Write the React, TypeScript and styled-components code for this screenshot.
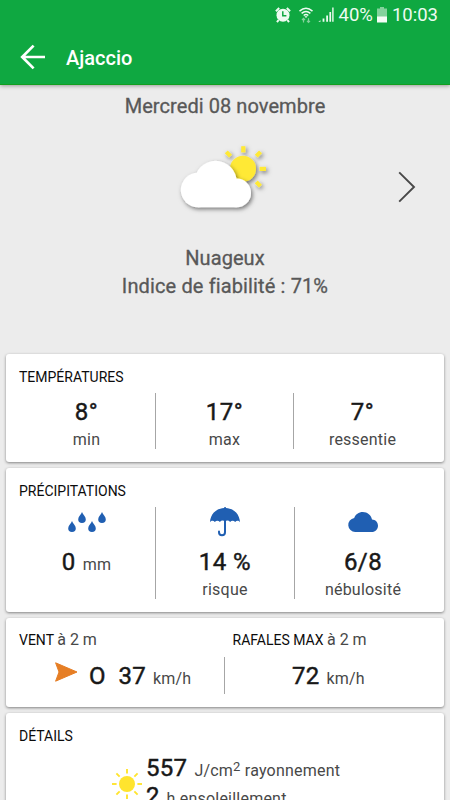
import React from 'react';
import styled, { createGlobalStyle } from 'styled-components';

const BLUE = '#205fb2';

const GlobalStyle = createGlobalStyle`
  * { box-sizing: border-box; }
  body { margin: 0; background: #ececec; font-family: Roboto, sans-serif; overflow: hidden; }
  svg { display: block; flex: none; overflow: visible; }
`;

const Screen = styled.div`
  width: 450px;
  height: 800px;
  overflow: hidden;
  display: flex;
  flex-direction: column;
  background: #ececec;
`;

const Header = styled.header`
  flex: none;
  height: 85px;
  background: #0fa841;
  border-bottom: 1px solid #129f1e;
  box-shadow: 0 1px 4px rgba(0, 0, 0, 0.35);
  color: #fff;
`;

const StatusBar = styled.div`
  height: 30px;
  display: flex;
  justify-content: flex-end;
  align-items: center;
  padding-right: 12px;
  font-size: 18.5px;
  line-height: 30px;
  color: #eefbf1;
`;

const StatusIcon = styled.svg<{ $gap: number }>`
  margin-right: ${(p) => p.$gap}px;
`;

const BatteryLevel = styled.span`
  margin-right: 4px;
`;

const AppBar = styled.div`
  height: 54px;
  display: flex;
  align-items: center;
  padding: 0 0 0 20px;
`;

const AppTitle = styled.h1`
  margin: 2px 0 0 20px;
  font-size: 20px;
  font-weight: 500;
  line-height: 26px;
`;

const Summary = styled.section`
  flex: none;
  height: 269px;
  display: flex;
  flex-direction: column;
  align-items: center;
  color: #585858;
`;

const SummaryText = styled.p<{ $spacing?: number }>`
  margin: 0;
  font-size: 20px;
  font-weight: 450;
  line-height: 28px;
  letter-spacing: ${(p) => p.$spacing ?? 0.07}px;
  -webkit-text-stroke: 0.3px currentColor;
`;

const DayRow = styled.div`
  width: 100%;
  height: 90px;
  margin: 15px 0 19px;
  display: grid;
  grid-template-columns: 1fr 90px 1fr;
  align-items: start;
  justify-items: end;
`;

const NextButton = styled.button`
  grid-column: 3;
  margin: 36px 34px 0 0;
  padding: 0;
  border: 0;
  background: none;
`;

const WeatherIcon = styled.svg`
  grid-column: 2;
  justify-self: start;
  margin-top: 7px;
`;

const DateLabel = styled(SummaryText)`
  margin-top: 7px;
`;

const Cards = styled.main`
  flex: none;
  display: flex;
  flex-direction: column;
  gap: 6px;
  padding: 0 6px;
`;

const Card = styled.section<{ $height: number }>`
  height: ${(p) => p.$height}px;
  padding: 13px 12px 0;
  background: #fff;
  border-radius: 3px;
  box-shadow: 0 1px 3px rgba(0, 0, 0, 0.45);
`;

const CardTitle = styled.h2`
  margin: 0 0 6px;
  padding-left: 1px;
  font-size: 14px;
  font-weight: 400;
  line-height: 20px;
  color: #0c0c0c;
`;

const TitleNote = styled.span`
  font-size: 16px;
  color: #484848;
`;

const Columns = styled.div<{ $template: string; $height: number }>`
  display: grid;
  grid-template-columns: ${(p) => p.$template};
  height: ${(p) => p.$height}px;
`;

const Metric = styled.div`
  display: flex;
  flex-direction: column;
  align-items: center;
  & + & { border-left: 1px solid #a6a6a6; }
`;

const Value = styled.strong<{ $spacing?: number }>`
  font-size: 24px;
  font-weight: 450;
  line-height: 28px;
  letter-spacing: ${(p) => p.$spacing ?? 0.45}px;
  color: #181818;
  -webkit-text-stroke: 0.45px currentColor;
`;

const Unit = styled.span`
  font-size: 16px;
  letter-spacing: 0.22px;
  color: #484848;
  white-space: nowrap;
`;

const Label = styled(Unit)`
  margin-top: 4px;
  line-height: 19px;
`;

const TemperatureValue = styled(Value)`
  margin-top: 5px;
`;

const IconSlot = styled.div`
  height: 30px;
  margin-bottom: 11px;
  display: flex;
  align-items: center;
`;

const Measure = styled.div`
  display: flex;
  align-items: baseline;
  gap: 7px;
`;

const WindTitles = styled.div`
  display: grid;
  grid-template-columns: 213.5px 1fr;
`;

const WindCell = styled.div<{ $indent: number }>`
  display: flex;
  align-items: center;
  padding-left: ${(p) => p.$indent}px;
  & + & { border-left: 1px solid #a6a6a6; }
`;

const Direction = styled(Value)`
  margin: 0 13px 0 11px;
`;

const WindCard = styled(Card)`
  padding-top: 12px;
`;

const WindTitle = styled(CardTitle)`
  margin-bottom: 7px;
`;

const DetailRow = styled.div`
  display: flex;
  padding: 2px 0 0 94px;
  gap: 4px;
`;

const DetailLines = styled.div`
  display: flex;
  flex-direction: column;
`;

const SunIcon = styled.svg`
  margin-top: 15px;
`;

const Exponent = styled.sup`
  font-size: 13px;
  line-height: 0;
  vertical-align: 5px;
`;

const DROPS = [
  [0, 9],
  [10, 0],
  [20, 9],
  [30, 0],
];

const Drops = () => (
  <svg width="38" height="20" viewBox="0 0 38 20" fill={BLUE}>
    {DROPS.map(([x, y]) => (
      <path
        key={x}
        transform={`translate(${x} ${y})`}
        d="M4 0C4.7 2.4 7.8 4.6 7.8 7.2A3.8 3.8 0 0 1 .2 7.2C.2 4.6 3.3 2.4 4 0Z"
      />
    ))}
  </svg>
);

const Umbrella = () => (
  <svg width="30" height="30" viewBox="0 0 30 30">
    <path
      fill={BLUE}
      d="M15 0C15.6 0 16 .4 16 .9C24 1.5 29.6 7.2 30 15.2C28.6 13.3 26.6 13.3 25.2 14.9C23.6 13.2 21.6 13.2 20.1 14.9C18.6 13.2 16.6 13.2 15 14.6C13.4 13.2 11.4 13.2 9.9 14.9C8.4 13.2 6.4 13.2 4.8 14.9C3.4 13.3 1.4 13.3 0 15.2C.4 7.2 6 1.5 14 .9C14 .4 14.4 0 15 0Z"
    />
    <path d="M15 13V25.2A3 3 0 0 1 9 25.2V24.6" fill="none" stroke={BLUE} strokeWidth="2" strokeLinecap="round" />
  </svg>
);

const SmallCloud = () => (
  <svg width="30" height="20" viewBox="0 0 30 20" fill={BLUE}>
    <path d="M7.2 20A7.1 7.1 0 0 1 6.2 5.9C7.4 2.4 10.8 0 14.8 0C19.4 0 23.3 3.2 24 7.6C27.4 7.6 30 10.4 30 13.7C30 17.2 27.2 20 23.8 20Z" />
  </svg>
);

const CloudySun = () => (
  <WeatherIcon width="90" height="70" viewBox="180 142 90 70">
    <defs>
      <filter id="soft" x="-20%" y="-20%" width="150%" height="150%">
        <feDropShadow dx="1.5" dy="2" stdDeviation="2" floodColor="#000" floodOpacity="0.5" />
      </filter>
    </defs>
    <g fill="#ffe936" filter="url(#soft)">
      <circle cx="243" cy="168.7" r="13" />
      <rect x="241.2" y="146.2" width="4.2" height="6.2" />
      <rect x="259.6" y="166.8" width="6.4" height="4.2" />
      <rect x="-3" y="-2.1" width="6" height="4.2" transform="translate(228.4 154) rotate(45)" />
      <rect x="-3" y="-2.1" width="6" height="4.2" transform="translate(258.4 154) rotate(-45)" />
      <rect x="-3" y="-2.1" width="6" height="4.2" transform="translate(258.3 184) rotate(45)" />
    </g>
    <g fill="#fff" filter="url(#soft)">
      <circle cx="198" cy="190" r="17.2" />
      <circle cx="215.6" cy="182" r="21.2" />
      <circle cx="236.7" cy="192.9" r="14.3" />
      <rect x="198" y="187" width="38.7" height="20.2" />
    </g>
  </WeatherIcon>
);

const RAYS = [0, 45, 90, 135, 180, 225, 270, 315];

const Sun = () => (
  <SunIcon width="30" height="30" viewBox="-15 -15 30 30">
    <circle r="8" fill="#ffe42e" />
    {RAYS.map((angle) => (
      <path key={angle} d="M0 -10.4V-15" stroke="#ffe42e" strokeWidth="1.9" transform={`rotate(${angle})`} />
    ))}
  </SunIcon>
);

const StatusIcons = () => (
  <>
    <StatusIcon $gap={8} width="16" height="16" viewBox="0 0 16 16">
      <circle cx="8" cy="8.2" r="6.5" fill="#eefbf1" />
      <path d="M.9 4.2L4.2 1M15.1 4.2L11.8 1M3.6 13L2 15.2M12.4 13L14 15.2" stroke="#eefbf1" strokeWidth="2" />
      <path d="M7.8 4.2V8.7H11.4" fill="none" stroke="#0fa841" strokeWidth="1.5" />
    </StatusIcon>
    <StatusIcon $gap={5} width="14" height="16" viewBox="0 0 14 16" fill="none" stroke="#eefbf1" strokeWidth="1.5">
      <path d="M.5 4.1Q7 -1.6 13.5 4.1M2.6 6.4Q7 2.6 11.4 6.4M4.7 8.5Q7 6.6 9.3 8.5" />
      <path d="M7 11L5.4 9.3H8.6Z" fill="#eefbf1" stroke="none" />
      <path d="M4.5 15.5V11.5M3 13L4.5 11.4L6 13M9.5 11.3V15.3M8 13.8L9.5 15.4L11 13.8" stroke="#83d29c" strokeWidth="1.2" />
    </StatusIcon>
    <StatusIcon $gap={5} width="16" height="16" viewBox="0 0 16 16" fill="#eefbf1">
      <path d="M.3 14.8L2.5 13.2V14.8ZM4.6 11.5H6.4V14.8H4.6ZM8.2 8.5H10V14.8H8.2ZM11.4 5H13.1V14.8H11.4ZM14.2 0.6H15.6V14.8H14.2Z" />
    </StatusIcon>
  </>
);

const Battery = () => (
  <StatusIcon $gap={5} width="10" height="16" viewBox="0 0 10 16">
    <path d="M3 0H7V1.6H10V10H0V1.6H3Z" fill="#83d29c" />
    <path d="M0 9.5H10V15.5H0Z" fill="#f4fdf6" />
  </StatusIcon>
);

export default function App() {
  return (
    <Screen>
      <GlobalStyle />
      <Header>
        <StatusBar>
          <StatusIcons />
          <BatteryLevel>40%</BatteryLevel>
          <Battery />
          <span>10:03</span>
        </StatusBar>
        <AppBar>
          <svg width="26" height="26" viewBox="0 0 26 26" fill="none" stroke="#fff" strokeWidth="2.7">
            <path d="M25 13H2.5M13.6 1.6L2.2 13L13.6 24.4" />
          </svg>
          <AppTitle>Ajaccio</AppTitle>
        </AppBar>
      </Header>

      <Summary>
        <DateLabel>Mercredi 08 novembre</DateLabel>
        <DayRow>
          <CloudySun />
          <NextButton aria-label="Jour suivant">
            <svg width="18" height="32" viewBox="0 0 18 32" fill="none" stroke="#484848" strokeWidth="1.9">
              <path d="M1.2 1.4L16 16L1.2 30.6" />
            </svg>
          </NextButton>
        </DayRow>
        <SummaryText>Nuageux</SummaryText>
        <SummaryText $spacing={0.13}>Indice de fiabilité : 71%</SummaryText>
      </Summary>

      <Cards>
        <Card $height={108}>
          <CardTitle>TEMPÉRATURES</CardTitle>
          <Columns $template="137px 138px 138px" $height={56}>
            <Metric>
              <TemperatureValue>8°</TemperatureValue>
              <Label>min</Label>
            </Metric>
            <Metric>
              <TemperatureValue>17°</TemperatureValue>
              <Label>max</Label>
            </Metric>
            <Metric>
              <TemperatureValue>7°</TemperatureValue>
              <Label>ressentie</Label>
            </Metric>
          </Columns>
        </Card>

        <Card $height={144}>
          <CardTitle>PRÉCIPITATIONS</CardTitle>
          <Columns $template="137px 139px 137px" $height={92}>
            <Metric>
              <IconSlot><Drops /></IconSlot>
              <Measure>
                <Value>0</Value>
                <Unit>mm</Unit>
              </Measure>
            </Metric>
            <Metric>
              <IconSlot><Umbrella /></IconSlot>
              <Value>14 %</Value>
              <Label>risque</Label>
            </Metric>
            <Metric>
              <IconSlot><SmallCloud /></IconSlot>
              <Value>6/8</Value>
              <Label>nébulosité</Label>
            </Metric>
          </Columns>
        </Card>

        <WindCard $height={89}>
          <WindTitles>
            <WindTitle>VENT <TitleNote>à 2 m</TitleNote></WindTitle>
            <WindTitle>RAFALES MAX <TitleNote>à 2 m</TitleNote></WindTitle>
          </WindTitles>
          <Columns $template="206px 1fr" $height={37}>
            <WindCell $indent={36}>
              <svg width="24" height="20" viewBox="0 0 24 20">
                <path d="M1.6 .8L23 10L1.6 19.2L5 10Z" transform="translate(0 -4)" fill="#e67e25" stroke="#e67e25" strokeWidth="1" strokeLinejoin="round" />
              </svg>
              <Direction $spacing={0}>O</Direction>
              <Measure>
                <Value $spacing={0.2}>37</Value>
                <Unit>km/h</Unit>
              </Measure>
            </WindCell>
            <WindCell $indent={67}>
              <Measure>
                <Value $spacing={0.2}>72</Value>
                <Unit>km/h</Unit>
              </Measure>
            </WindCell>
          </Columns>
        </WindCard>

        <Card $height={160}>
          <CardTitle>DÉTAILS</CardTitle>
          <DetailRow>
            <Sun />
            <DetailLines>
              <Measure>
                <Value $spacing={0.3}>557</Value>
                <Unit>J/cm<Exponent>2</Exponent> rayonnement</Unit>
              </Measure>
              <Measure>
                <Value $spacing={0}>2</Value>
                <Unit>h ensoleillement</Unit>
              </Measure>
            </DetailLines>
          </DetailRow>
        </Card>
      </Cards>
    </Screen>
  );
}
